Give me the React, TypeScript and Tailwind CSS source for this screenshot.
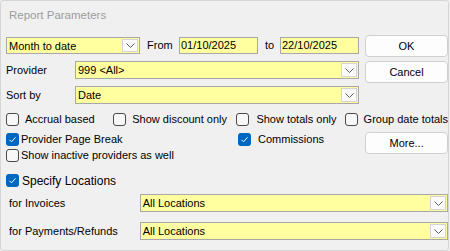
import React from "react"

const font = { fontFamily: '"Liberation Sans", Arial, sans-serif' }

const Chevron = () => (
    <svg width="9" height="5" viewBox="0 0 9 5" className="block">
        <path d="M0.5 0.5 L4.5 4.5 L8.5 0.5" fill="none" stroke="#5c5c5c" strokeWidth="1" />
    </svg>
)

const Combo = ({ value, className }: { value: string; className: string }) => (
    <div className={`flex h-[18px] border border-[#a8a8a8] bg-[#ffffa0] ${className}`}>
        <div className="flex-1 pl-[2px] text-[11px] leading-[16px] text-black">{value}</div>
        <div className="m-[1px] flex w-[16px] items-center justify-center border border-[#d4d4d4] bg-[#fbfbfb]">
            <Chevron />
        </div>
    </div>
)

const DateBox = ({ value }: { value: string }) => (
    <div className="h-[17px] w-[79px] border border-[#a8a8a8] bg-[#ffffa0] pl-[1px] text-[11px] leading-[15px] text-black">
        {value}
    </div>
)

const Button = ({ label, className = "" }: { label: string; className?: string }) => (
    <div className={`flex h-[22px] w-[83px] items-center justify-center rounded-[4px] border border-[#d0d0d0] bg-[#fdfdfd] text-[11px] text-black ${className}`}>
        {label}
    </div>
)

const Check = ({ checked, label, gap, className = "" }: { checked?: boolean; label: string; gap: string; className?: string }) => (
    <div className={`flex h-[13px] items-center ${className}`}>
        {checked ? (
            <div className="flex h-[13px] w-[13px] items-center justify-center rounded-[3px] bg-[#0067c0]">
                <svg width="13" height="13" viewBox="0 0 13 13">
                    <path d="M3.5 6.8 L5.5 8.8 L9.5 4.3" fill="none" stroke="#ffffff" strokeWidth="1" />
                </svg>
            </div>
        ) : (
            <div className="h-[13px] w-[13px] rounded-[3px] border border-[#4a4a4a] bg-[#f8f8f8]" />
        )}
        <span className={`${gap} whitespace-nowrap text-[11px] text-black`}>{label}</span>
    </div>
)

export default function App() {
    return (
        <div className="h-[251px] w-[450px] bg-[#f0f0f0]" style={font}>
            <div className="h-[251px] w-[449px] rounded-[3px] border border-[#d6d6d6] pl-[5px]">
                <div className="h-[35px] pl-[3px] pt-[6px] text-[11.5px] text-[#9d9d9d]">Report Parameters</div>

                {/* top: combos + OK/Cancel */}
                <div className="flex">
                    <div className="w-[359px]">
                        <div className="mt-[1px] flex h-[17px] items-center">
                            <Combo value="Month to date" className="!h-[17px] w-[134px]" />
                            <span className="ml-[7px] w-[32px] text-[11px] text-black">From</span>
                            <DateBox value="01/10/2025" />
                            <span className="ml-[7px] w-[15px] text-[11px] text-black">to</span>
                            <DateBox value="22/10/2025" />
                        </div>
                        <div className="mt-[7px] flex items-center">
                            <span className="w-[69px] text-[11px] text-black">Provider</span>
                            <Combo value="999 <All>" className="w-[284px]" />
                        </div>
                        <div className="mt-[7px] flex items-center">
                            <span className="w-[69px] text-[11px] text-black">Sort by</span>
                            <Combo value="Date" className="w-[284px]" />
                        </div>
                    </div>
                    <div className="ml-[5px] -mt-[1px]">
                        <Button label="OK" />
                        <Button label="Cancel" className="mt-[4px]" />
                    </div>
                </div>

                {/* options */}
                <div className="mt-[9px] flex">
                    <Check label="Accrual based" gap="ml-[6px]" className="w-[108px]" />
                    <Check label="Show discount only" gap="ml-[6px]" className="w-[124px]" />
                    <Check label="Show totals only" gap="ml-[7px]" className="w-[109px]" />
                    <Check label="Group date totals" gap="ml-[6px]" />
                </div>
                <div className="flex">
                    <div className="w-[360px]">
                        <div className="mt-[7px] flex">
                            <Check checked label="Provider Page Break" gap="ml-[2px]" className="w-[232px]" />
                            <Check checked label="Commissions" gap="ml-[7px]" />
                        </div>
                        <Check label="Show inactive providers as well" gap="ml-[2px]" className="mt-[3px]" />
                    </div>
                    <Button label="More..." className="mt-[6px]" />
                </div>

                {/* locations */}
                <div className="mt-[12px] flex h-[13px] items-center">
                    <div className="flex h-[13px] w-[13px] items-center justify-center rounded-[3px] bg-[#0067c0]">
                        <svg width="13" height="13" viewBox="0 0 13 13">
                            <path d="M3.5 6.8 L5.5 8.8 L9.5 4.3" fill="none" stroke="#ffffff" strokeWidth="1" />
                        </svg>
                    </div>
                    <span className="ml-[3px] text-[12px] text-black">Specify Locations</span>
                </div>
                <div className="mt-[7px] flex items-center">
                    <span className="w-[134px] pl-[3px] text-[11px] text-black">for Invoices</span>
                    <Combo value="All Locations" className="w-[309px]" />
                </div>
                <div className="mt-[10px] flex items-center">
                    <span className="w-[134px] pl-[3px] text-[11px] text-black">for Payments/Refunds</span>
                    <Combo value="All Locations" className="w-[309px]" />
                </div>
            </div>
        </div>
    )
}
